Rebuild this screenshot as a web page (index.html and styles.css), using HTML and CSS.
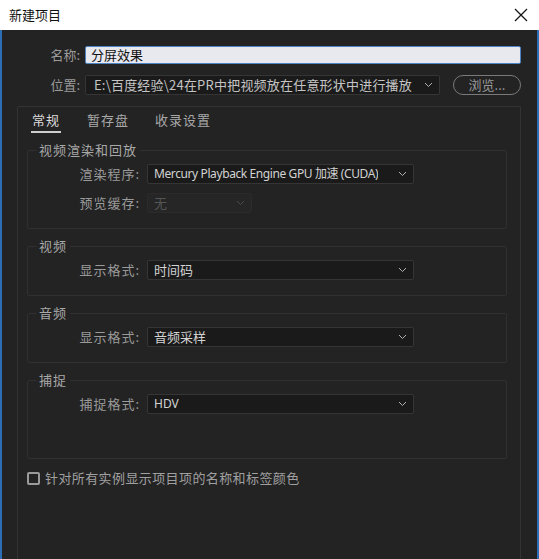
FILE: index.html
```html
<!DOCTYPE html>
<html lang="zh-CN">
<head>
    <meta charset="UTF-8">
    <title>新建项目</title>
    <link rel="stylesheet" href="styles.css">
</head>
<body>
<div class="titlebar">
    <span class="title">新建项目</span>
    <svg class="close" width="14" height="14" viewBox="0 0 14 14">
        <path d="M1 1 L13 13 M13 1 L1 13" stroke="#111" stroke-width="1.2" fill="none"/>
    </svg>
</div>

<div class="dialog">
    <div class="row top-row">
        <label class="top-label">名称:</label>
        <div class="name-input">分屏效果</div>
    </div>
    <div class="row top-row">
        <label class="top-label">位置:</label>
        <div class="select location">
            <span class="value">E:\百度经验\24在PR中把视频放在任意形状中进行播放</span>
            <svg class="chev" width="9" height="6" viewBox="0 0 9 6"><path d="M1 1 L4.5 4.5 L8 1" stroke="#b0b0b0" fill="none"/></svg>
        </div>
        <button class="btn-browse">浏览...</button>
    </div>

    <section class="panel">
        <ul class="tabs">
            <li class="active">常规</li>
            <li>暂存盘</li>
            <li>收录设置</li>
        </ul>

        <fieldset class="group">
            <legend>视频渲染和回放</legend>
            <div class="row field">
                <label>渲染程序:</label>
                <div class="select wide">
                    <span class="value latin tight">Mercury Playback Engine GPU 加速 (CUDA)</span>
                    <svg class="chev" width="9" height="6" viewBox="0 0 9 6"><path d="M1 1 L4.5 4.5 L8 1" stroke="#b0b0b0" fill="none"/></svg>
                </div>
            </div>
            <div class="row field">
                <label>预览缓存:</label>
                <div class="select short disabled">
                    <span class="value">无</span>
                    <svg class="chev" width="9" height="6" viewBox="0 0 9 6"><path d="M1 1 L4.5 4.5 L8 1" stroke="#4a4a4a" fill="none"/></svg>
                </div>
            </div>
        </fieldset>

        <fieldset class="group">
            <legend>视频</legend>
            <div class="row field">
                <label>显示格式:</label>
                <div class="select wide">
                    <span class="value">时间码</span>
                    <svg class="chev" width="9" height="6" viewBox="0 0 9 6"><path d="M1 1 L4.5 4.5 L8 1" stroke="#b0b0b0" fill="none"/></svg>
                </div>
            </div>
        </fieldset>

        <fieldset class="group">
            <legend>音频</legend>
            <div class="row field">
                <label>显示格式:</label>
                <div class="select wide">
                    <span class="value">音频采样</span>
                    <svg class="chev" width="9" height="6" viewBox="0 0 9 6"><path d="M1 1 L4.5 4.5 L8 1" stroke="#b0b0b0" fill="none"/></svg>
                </div>
            </div>
        </fieldset>

        <fieldset class="group tall">
            <legend>捕捉</legend>
            <div class="row field">
                <label>捕捉格式:</label>
                <div class="select wide">
                    <span class="value latin">HDV</span>
                    <svg class="chev" width="9" height="6" viewBox="0 0 9 6"><path d="M1 1 L4.5 4.5 L8 1" stroke="#b0b0b0" fill="none"/></svg>
                </div>
            </div>
        </fieldset>

        <div class="check-row">
            <span class="checkbox"></span>
            <span class="check-text">针对所有实例显示项目项的名称和标签颜色</span>
        </div>
    </section>
</div>
</body>
</html>
```

FILE: styles.css
```css
* {
    margin: 0;
    padding: 0;
    box-sizing: border-box;
}
html, body {
    height: 100%;
    overflow: hidden;
}
body {
    font-family: "Noto Sans CJK SC", "Noto Sans", sans-serif;
    font-size: 13px;
    line-height: 18px;
    background: #232323;
    color: #a8a8a8;
}
.titlebar {
    height: 30px;
    background: #ffffff;
    color: #111;
    display: flex;
    align-items: center;
    justify-content: space-between;
    padding: 0 11px 0 9px;
}
.title {
    font-size: 13px;
}
.dialog {
    height: 529px;
    border-left: 2px solid #2c6db5;
    border-right: 2px solid #2c6db5;
    padding-top: 16px;
}
.row {
    display: flex;
    align-items: center;
}
.top-row {
    margin-bottom: 11px;
}
.top-label {
    width: 78px;
    text-align: right;
    margin-right: 5px;
    color: #9a9a9a;
}
.name-input {
    width: 436px;
    height: 18px;
    background: #e8e8ef;
    border: 1px solid #4d82c4;
    border-radius: 2px;
    color: #111;
    padding-left: 5px;
    line-height: 16px;
}
.select {
    height: 20px;
    background: #1a1a1a;
    border: 1px solid #353535;
    border-radius: 2px;
    display: flex;
    align-items: center;
    justify-content: space-between;
    padding: 0 6px 0 6px;
    color: #d2d2d2;
}
.select .value {
    white-space: nowrap;
    overflow: hidden;
}
.select .chev {
    flex-shrink: 0;
}
.location {
    width: 355px;
    color: #c4c4c4;
    padding-left: 8px;
}
.location .value {
    letter-spacing: 0.2px;
}
.btn-browse {
    width: 68px;
    height: 20px;
    margin-left: 13px;
    background: transparent;
    border: 1px solid #7a7a7a;
    border-radius: 10px;
    color: #9a9a9a;
    font-family: inherit;
    font-size: 13px;
    line-height: 18px;
}
.panel {
    margin-left: 15px;
    width: 504px;
    height: 460px;
    border: 1px solid #333;
    border-bottom: none;
    border-radius: 2px;
    padding: 4px 0 0 9px;
}
.tabs {
    list-style: none;
    display: flex;
    padding-left: 5px;
    height: 26px;
}
.tabs li {
    margin-right: 26px;
    letter-spacing: 1px;
    color: #a8a8a8;
    height: 22px;
}
.tabs li.active {
    color: #dcdcdc;
    border-bottom: 2px solid #cfcfcf;
    padding: 0 1px;
    margin-left: -1px;
}
.group {
    width: 480px;
    border: 1px solid #303030;
    border-radius: 2px;
    margin-top: 4px;
    padding: 5px 0 15px 0;
}
.group + .group {
    margin-top: 8px;
}
.group.tall {
    padding-bottom: 44px;
}
.group legend {
    margin-left: 8px;
    padding: 0 3px;
    color: #a8a8a8;
    letter-spacing: 1px;
}
.field + .field {
    margin-top: 9px;
}
.field label {
    width: 112px;
    text-align: right;
    margin-right: 7px;
    color: #9a9a9a;
    letter-spacing: 1px;
}
.wide {
    width: 267px;
}
.short {
    width: 105px;
}
.select.disabled {
    background: #262626;
    border-color: #2b2b2b;
    color: #555;
}
.latin {
    font-family: "Noto Sans", "Noto Sans CJK SC", sans-serif;
    font-size: 12px;
}
.tight {
    letter-spacing: -0.4px;
}
.check-row {
    display: flex;
    align-items: center;
    margin-top: 10px;
}
.checkbox {
    width: 13px;
    height: 13px;
    border: 2px solid #9a9a9a;
    border-radius: 2px;
    margin-right: 5px;
}
.check-text {
    color: #a0a0a0;
    letter-spacing: 0.4px;
}
```
